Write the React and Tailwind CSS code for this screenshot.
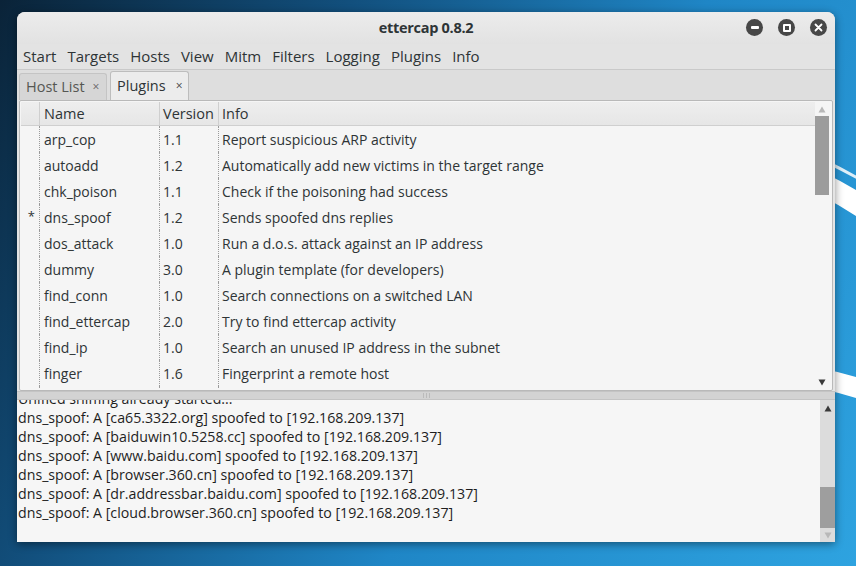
import React from 'react';

const plugins = [
  { mark: '', name: 'arp_cop', ver: '1.1', info: 'Report suspicious ARP activity' },
  { mark: '', name: 'autoadd', ver: '1.2', info: 'Automatically add new victims in the target range' },
  { mark: '', name: 'chk_poison', ver: '1.1', info: 'Check if the poisoning had success' },
  { mark: '*', name: 'dns_spoof', ver: '1.2', info: 'Sends spoofed dns replies' },
  { mark: '', name: 'dos_attack', ver: '1.0', info: 'Run a d.o.s. attack against an IP address' },
  { mark: '', name: 'dummy', ver: '3.0', info: 'A plugin template (for developers)' },
  { mark: '', name: 'find_conn', ver: '1.0', info: 'Search connections on a switched LAN' },
  { mark: '', name: 'find_ettercap', ver: '2.0', info: 'Try to find ettercap activity' },
  { mark: '', name: 'find_ip', ver: '1.0', info: 'Search an unused IP address in the subnet' },
  { mark: '', name: 'finger', ver: '1.6', info: 'Fingerprint a remote host' },
  { mark: '', name: 'finger_submit', ver: '1.0', info: 'Submit a fingerprint to ettercap\'s website' },
];

const logLines = [
  'Unified sniffing already started...',
  'dns_spoof: A [ca65.3322.org] spoofed to [192.168.209.137]',
  'dns_spoof: A [baiduwin10.5258.cc] spoofed to [192.168.209.137]',
  'dns_spoof: A [www.baidu.com] spoofed to [192.168.209.137]',
  'dns_spoof: A [browser.360.cn] spoofed to [192.168.209.137]',
  'dns_spoof: A [dr.addressbar.baidu.com] spoofed to [192.168.209.137]',
  'dns_spoof: A [cloud.browser.360.cn] spoofed to [192.168.209.137]',
];

const menus = ['Start', 'Targets', 'Hosts', 'View', 'Mitm', 'Filters', 'Logging', 'Plugins', 'Info'];

const font = { fontFamily: '"Open Sans", "Noto Sans", sans-serif' };

const Arrow = ({ up, faded }) => (
  <svg width="8" height="7" viewBox="0 0 8 7">
    <path d={up ? 'M4 0.5 L7.5 6.5 L0.5 6.5 Z' : 'M0.5 0.5 L7.5 0.5 L4 6.5 Z'} fill={faded ? '#b8b8b8' : '#3a3a3a'} />
  </svg>
);

const WinButton = ({ kind }) => (
  <div className="w-[17px] h-[17px] rounded-full bg-[#474747] flex items-center justify-center">
    {kind === 'min' && <div className="w-[8px] h-[3px] bg-white rounded-[1px]" />}
    {kind === 'max' && <div className="w-[8px] h-[8px] border-2 border-white rounded-[1px]" />}
    {kind === 'close' && (
      <svg width="9" height="9" viewBox="0 0 9 9">
        <path d="M1.5 1.5 L7.5 7.5 M7.5 1.5 L1.5 7.5" stroke="#fff" strokeWidth="1.8" strokeLinecap="round" />
      </svg>
    )}
  </div>
);

export default function App() {
  return (
    <div
      className="w-[856px] h-[566px] relative overflow-hidden bg-[linear-gradient(120deg,#0a2338_0%,#12507e_30%,#1f86c6_60%,#2ea3e0_100%)]"
      style={font}
    >
      {/* wallpaper swooshes */}
      <svg className="absolute inset-0" width="856" height="566" viewBox="0 0 856 566">
        <path d="M800 150 Q830 162 870 185" stroke="#ffffff" strokeOpacity="0.85" strokeWidth="3" fill="none" />
        <path d="M790 170 Q830 185 870 212" stroke="#ffffff" strokeWidth="22" fill="none" />
        <path d="M780 372 Q830 378 870 392" stroke="#ffffff" strokeWidth="20" fill="none" />
      </svg>

      {/* window */}
      <div className="absolute left-[17px] top-[12px] w-[818px] h-[530px] rounded-t-[8px] bg-[#e4e4e4] shadow-[0_2px_8px_rgba(0,0,0,0.45)] flex flex-col overflow-hidden">
        {/* title bar */}
        <div className="h-[32px] shrink-0 relative flex items-center justify-center bg-[linear-gradient(#ececec,#e2e2e2)]">
          <span className="text-[14.5px] font-bold text-[#2e3436] tracking-[-0.3px]">ettercap 0.8.2</span>
          <div className="absolute right-[8px] top-[7px] flex gap-[15px]">
            <WinButton kind="min" />
            <WinButton kind="max" />
            <WinButton kind="close" />
          </div>
        </div>

        {/* menu bar */}
        <div className="h-[26px] shrink-0 flex items-center pl-[6px] gap-[11px] border-b border-[#c9c9c9] bg-[#e3e3e3] text-[15px] text-[#2e3436]">
          {menus.map((m) => (
            <span key={m}>{m}</span>
          ))}
        </div>

        {/* tabs */}
        <div className="h-[30px] shrink-0 flex items-end pl-[2px] gap-[3px] bg-[#dedede]">
          <div className="w-[88px] h-[27px] pl-[6px] flex items-center gap-[8px] rounded-t-[3px] border border-b-0 border-[#c4c4c4] bg-[#d6d6d6] text-[14.5px] text-[#555753]">
            <span>Host List</span>
            <span className="text-[12px] text-[#666]">×</span>
          </div>
          <div className="w-[79px] h-[29px] pl-[6px] flex items-center gap-[10px] rounded-t-[3px] border border-b-0 border-[#bdbdbd] bg-[#ececec] text-[14.5px] text-[#2e3436]">
            <span>Plugins</span>
            <span className="text-[12px] text-[#444]">×</span>
          </div>
        </div>

        {/* plugin list panel */}
        <div className="h-[291px] shrink-0 mx-[2px] border border-[#b9b9b9] rounded-[2px] bg-[#f5f5f5] flex p-[1px]">
          <div className="flex-1 flex flex-col overflow-hidden text-[14px] text-[#2e3436]">
            <div className="h-[24px] shrink-0 flex items-stretch border-b border-[#cfcfcf] bg-[linear-gradient(#eeeeee,#e6e6e6)] text-[14.5px]">
              <div className="w-[18px] shrink-0" />
              <div className="w-[120px] border-l border-[#cfcfcf] pl-[4px] flex items-center">Name</div>
              <div className="w-[59px] border-l border-[#cfcfcf] pl-[3px] flex items-center">Version</div>
              <div className="flex-1 border-l border-[#cfcfcf] pl-[3px] flex items-center">Info</div>
            </div>
            {plugins.map((p) => (
              <div key={p.name} className="h-[26px] shrink-0 flex items-stretch">
                <div className="w-[18px] shrink-0 flex items-center justify-end pr-[4px] text-[13px]">{p.mark}</div>
                <div className="w-[120px] border-l border-dotted border-[#9a9a9a] pl-[4px] flex items-center">{p.name}</div>
                <div className="w-[59px] border-l border-dotted border-[#9a9a9a] pl-[3px] flex items-center">{p.ver}</div>
                <div className="flex-1 border-l border-dotted border-[#9a9a9a] pl-[3px] flex items-center">{p.info}</div>
              </div>
            ))}
          </div>
          {/* scrollbar */}
          <div className="w-[14px] shrink-0 mr-[2px] flex flex-col items-center">
            <div className="h-[14px] flex items-center"><Arrow up faded /></div>
            <div className="w-[14px] h-[79px] bg-[#9c9c9c]" />
            <div className="flex-1" />
            <div className="h-[14px] flex items-center"><Arrow /></div>
          </div>
        </div>

        {/* pane handle */}
        <div className="h-[9px] shrink-0 bg-[#d3d3d3] border-y border-[#c4c4c4] flex items-center justify-center gap-[2px]">
          <div className="w-px h-[5px] bg-[#bbbbbb]" />
          <div className="w-px h-[5px] bg-[#bbbbbb]" />
          <div className="w-px h-[5px] bg-[#bbbbbb]" />
        </div>

        {/* log view */}
        <div className="flex-1 flex bg-[#f6f6f6] overflow-hidden">
          <div className="flex-1 overflow-hidden pl-[1px] text-[14.2px] leading-[19px] text-[#1e1e1e]">
            <div className="-mt-[11px]">
              {logLines.map((l, i) => (
                <div key={i} className="whitespace-nowrap">{l}</div>
              ))}
            </div>
          </div>
          <div className="w-[15px] shrink-0 bg-[#dcdcdc] flex flex-col items-center">
            <div className="h-[16px] flex items-center"><Arrow up /></div>
            <div className="flex-1" />
            <div className="w-[15px] h-[41px] bg-[#9e9e9e]" />
            <div className="h-[14px] flex items-center"><Arrow faded /></div>
          </div>
        </div>
      </div>
    </div>
  );
}
